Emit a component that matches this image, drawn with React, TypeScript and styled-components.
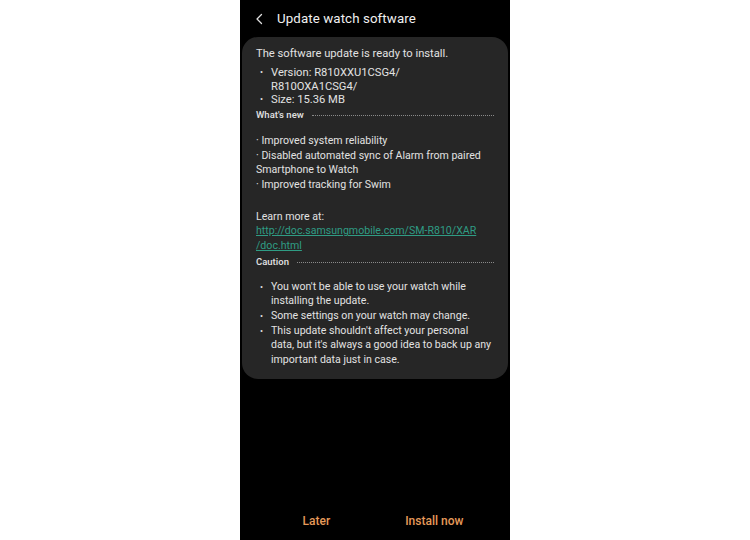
import React from 'react';
import styled, { createGlobalStyle } from 'styled-components';

const GlobalStyle = createGlobalStyle`
  html, body {
    margin: 0;
    padding: 0;
    background: #ffffff;
  }
  body {
    font-family: Roboto, "Noto Sans", Arial, sans-serif;
  }
`;

const Page = styled.div`
  display: flex;
  justify-content: center;
  width: 750px;
  height: 540px;
`;

const Phone = styled.div`
  display: flex;
  flex-direction: column;
  width: 270px;
  height: 540px;
  background: #000000;
  color: #e6e6e6;
`;

const Header = styled.div`
  display: flex;
  align-items: center;
  height: 37px;
  padding-left: 15px;
  gap: 13px;
`;

const Title = styled.div`
  font-size: 13.3px;
  color: #f0f0f0;
  letter-spacing: 0.1px;
`;

const Card = styled.div`
  margin: 0 2px;
  padding: 10px 16px 11px 14px;
  background: #262626;
  border-radius: 16px;
  font-size: 10.6px;
  line-height: 14.7px;
  color: #e2e2e2;
`;

const Summary = styled.div`
  font-size: 11.2px;
  line-height: 13.8px;
`;

const Intro = styled.div`
  margin-bottom: 5px;
`;

const BulletList = styled.ul<{ $top?: number }>`
  list-style: none;
  margin: ${(p) => p.$top ?? 0}px 0 0 0;
  padding: 0;
`;

const BulletItem = styled.li`
  position: relative;
  padding-left: 15px;
  &::before {
    content: '•';
    position: absolute;
    left: 4px;
    top: 0;
    font-size: 9px;
  }
`;

const SectionHead = styled.div<{ $top?: number }>`
  display: flex;
  align-items: center;
  margin-top: ${(p) => p.$top ?? 1}px;
  margin-right: -2px;
  font-size: 9.5px;
  font-weight: 600;
  color: #dcdcdc;
`;

const Dots = styled.span`
  flex: 1;
  margin-left: 8px;
  border-bottom: 1px dotted #8a8a8a;
  height: 0;
`;

const Notes = styled.div`
  margin-top: 11px;
  margin-bottom: 17px;
`;

const Link = styled.a`
  color: #2f9c84;
  text-decoration: underline;
`;

const Spacer = styled.div`
  flex: 1;
`;

const Footer = styled.div`
  display: flex;
  justify-content: center;
  align-items: center;
  gap: 75px;
  height: 38px;
  padding-left: 16px;
`;

const ActionButton = styled.button`
  background: none;
  border: none;
  padding: 0;
  font-family: inherit;
  font-size: 12px;
  font-weight: 500;
  color: #e69a5a;
  cursor: pointer;
`;

const BackIcon = () => (
  <svg width="9" height="12" viewBox="0 0 9 12" fill="none">
    <path d="M6.5 1.5L2 6l4.5 4.5" stroke="#e0e0e0" strokeWidth="1.3" strokeLinecap="round" strokeLinejoin="round" />
  </svg>
);

export default function App() {
  return (
    <>
      <GlobalStyle />
      <Page>
        <Phone>
          <Header>
            <BackIcon />
            <Title>Update watch software</Title>
          </Header>
          <Card>
            <Summary>
              <Intro>The software update is ready to install.</Intro>
              <BulletList>
                <BulletItem>
                  Version: R810XXU1CSG4/
                  <br />
                  R810OXA1CSG4/
                </BulletItem>
                <BulletItem>Size: 15.36 MB</BulletItem>
              </BulletList>
            </Summary>
            <SectionHead>
              What's new
              <Dots />
            </SectionHead>
            <Notes>
              · Improved system reliability
              <br />
              · Disabled automated sync of Alarm from paired Smartphone to Watch
              <br />
              · Improved tracking for Swim
            </Notes>
            <div>Learn more at:</div>
            <Link href="#">
              http://doc.samsungmobile.com/SM-R810/XAR
              <br />
              /doc.html
            </Link>
            <SectionHead $top={1}>
              Caution
              <Dots />
            </SectionHead>
            <BulletList $top={10}>
              <BulletItem>You won't be able to use your watch while installing the update.</BulletItem>
              <BulletItem>Some settings on your watch may change.</BulletItem>
              <BulletItem>
                This update shouldn't affect your personal
                <br />
                data, but it's always a good idea to back up any important data just in case.
              </BulletItem>
            </BulletList>
          </Card>
          <Spacer />
          <Footer>
            <ActionButton>Later</ActionButton>
            <ActionButton>Install now</ActionButton>
          </Footer>
        </Phone>
      </Page>
    </>
  );
}
